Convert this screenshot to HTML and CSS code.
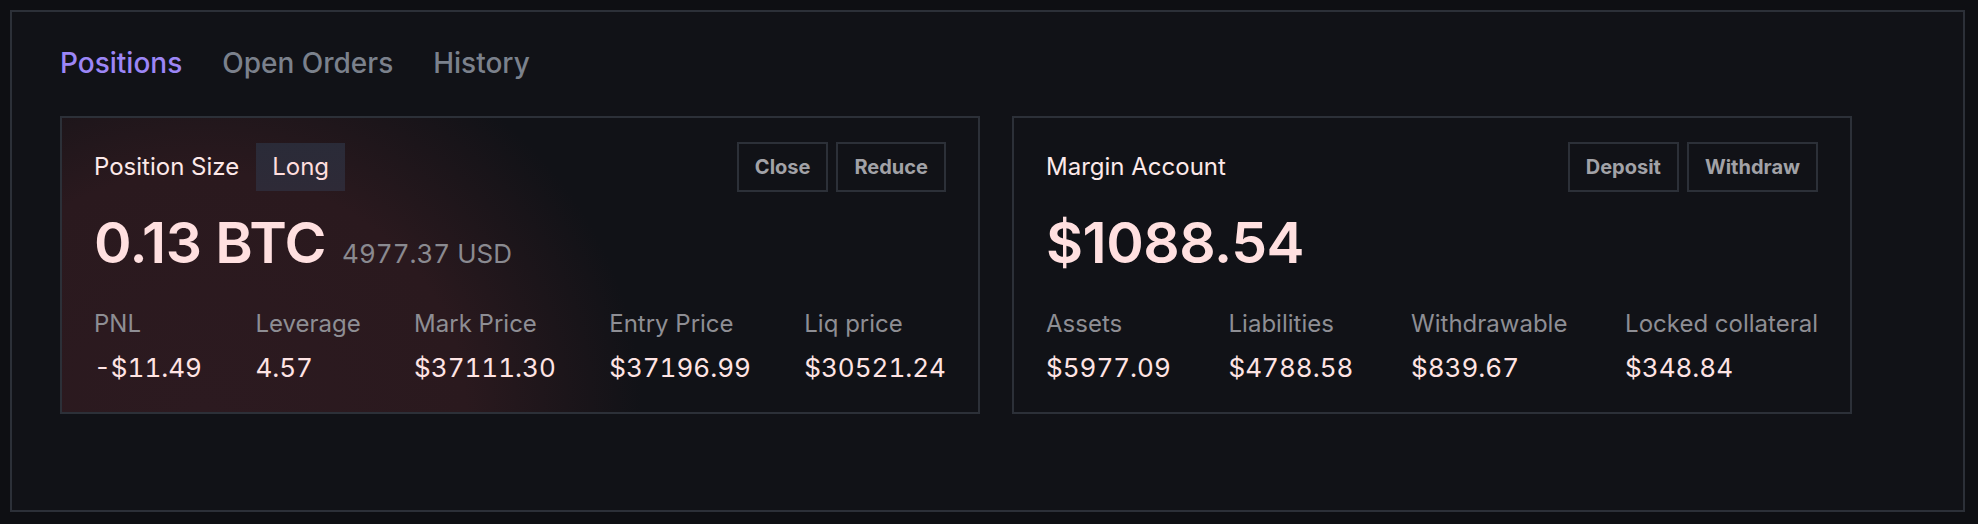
FILE: index.html
```html
<!DOCTYPE html>
<html lang="en">
<head>
<meta charset="utf-8">
<title>Positions</title>
<link rel="stylesheet" href="styles.css">
</head>
<body>
<div class="panel">
  <nav class="tabs">
    <span class="tab active">Positions</span>
    <span class="tab">Open Orders</span>
    <span class="tab">History</span>
  </nav>
  <div class="cards">
    <section class="card card-position">
      <div class="card-head">
        <div class="title-group">
          <span class="card-title">Position Size</span>
          <span class="badge">Long</span>
        </div>
        <div class="actions">
          <button class="btn">Close</button>
          <button class="btn">Reduce</button>
        </div>
      </div>
      <div class="big-row">
        <span class="big">0.13 BTC</span>
        <span class="sub">4977.37 USD</span>
      </div>
      <div class="stats">
        <div class="stat"><div class="label">PNL</div><div class="value">-$11.49</div></div>
        <div class="stat"><div class="label">Leverage</div><div class="value">4.57</div></div>
        <div class="stat"><div class="label">Mark Price</div><div class="value">$37111.30</div></div>
        <div class="stat"><div class="label">Entry Price</div><div class="value">$37196.99</div></div>
        <div class="stat"><div class="label">Liq price</div><div class="value">$30521.24</div></div>
      </div>
    </section>
    <section class="card card-margin">
      <div class="card-head">
        <div class="title-group">
          <span class="card-title">Margin Account</span>
        </div>
        <div class="actions">
          <button class="btn">Deposit</button>
          <button class="btn">Withdraw</button>
        </div>
      </div>
      <div class="big-row">
        <span class="big">$1088.54</span>
      </div>
      <div class="stats">
        <div class="stat"><div class="label">Assets</div><div class="value">$5977.09</div></div>
        <div class="stat"><div class="label">Liabilities</div><div class="value">$4788.58</div></div>
        <div class="stat"><div class="label">Withdrawable</div><div class="value">$839.67</div></div>
        <div class="stat"><div class="label">Locked collateral</div><div class="value">$348.84</div></div>
      </div>
    </section>
  </div>
</div>
</body>
</html>
```

FILE: styles.css
```css
* { box-sizing: border-box; }

html, body {
  margin: 0;
  padding: 0;
  background: #0e0f13;
}

body {
  font-family: Inter, "Noto Sans", "Liberation Sans", sans-serif;
  color: #ffe2e2;
}

.panel {
  margin: 10px;
  width: 1955px;
  height: 502px;
  border: 2px solid #2c3038;
  background: #111217;
  padding: 33px 48px 0 48px;
}

.tabs {
  display: flex;
  gap: 40px;
  margin-bottom: 35px;
}

.tab {
  font-size: 28px;
  line-height: 36px;
  font-weight: 500;
  color: #7b818c;
}

.tab.active {
  color: #9c86f6;
}

.cards {
  display: flex;
  gap: 32px;
  align-items: flex-start;
}

.card {
  border: 2px solid #2c3038;
  background-color: #111217;
  padding: 24px 32px 26px 32px;
}

.card-position {
  width: 920px;
  background-image: radial-gradient(ellipse 440px 400px at 140px 100%, #2c1a20 0%, #2a191e 60%, rgba(42, 25, 30, 0) 100%);
}

.card-margin {
  width: 840px;
}

.card-head {
  display: flex;
  justify-content: space-between;
  align-items: center;
  height: 50px;
}

.title-group {
  display: flex;
  align-items: center;
  gap: 17px;
}

.card-title {
  font-size: 24px;
  line-height: 32px;
  font-weight: 400;
  color: #fde9e9;
}

.badge {
  font-size: 24px;
  line-height: 24px;
  padding: 12px 16px;
  color: #ffdede;
  background: linear-gradient(180deg, #2a2b38 0%, #2e2a37 100%);
}

.actions {
  display: flex;
  gap: 8px;
}

.btn {
  font-family: inherit;
  font-size: 20px;
  line-height: 24px;
  font-weight: 700;
  color: #a2a2a7;
  background: transparent;
  border: 2px solid #2c3038;
  padding: 11px 16px;
  margin: 0;
}

.big-row {
  display: flex;
  align-items: baseline;
  gap: 16px;
  margin-top: 19px;
}

.big {
  font-size: 57px;
  line-height: 64px;
  font-weight: 600;
  color: #ffe0e0;
  letter-spacing: -0.5px;
}

.sub {
  font-size: 26px;
  line-height: 32px;
  color: #8a8a90;
  font-variant-numeric: tabular-nums;
}

.stats {
  display: flex;
  justify-content: space-between;
  margin-top: 33px;
}

.label {
  font-size: 24px;
  line-height: 32px;
  color: #8e8e94;
}

.value {
  font-size: 26px;
  line-height: 36px;
  color: #ffe4e4;
  margin-top: 10px;
  font-variant-numeric: tabular-nums;
}
```
